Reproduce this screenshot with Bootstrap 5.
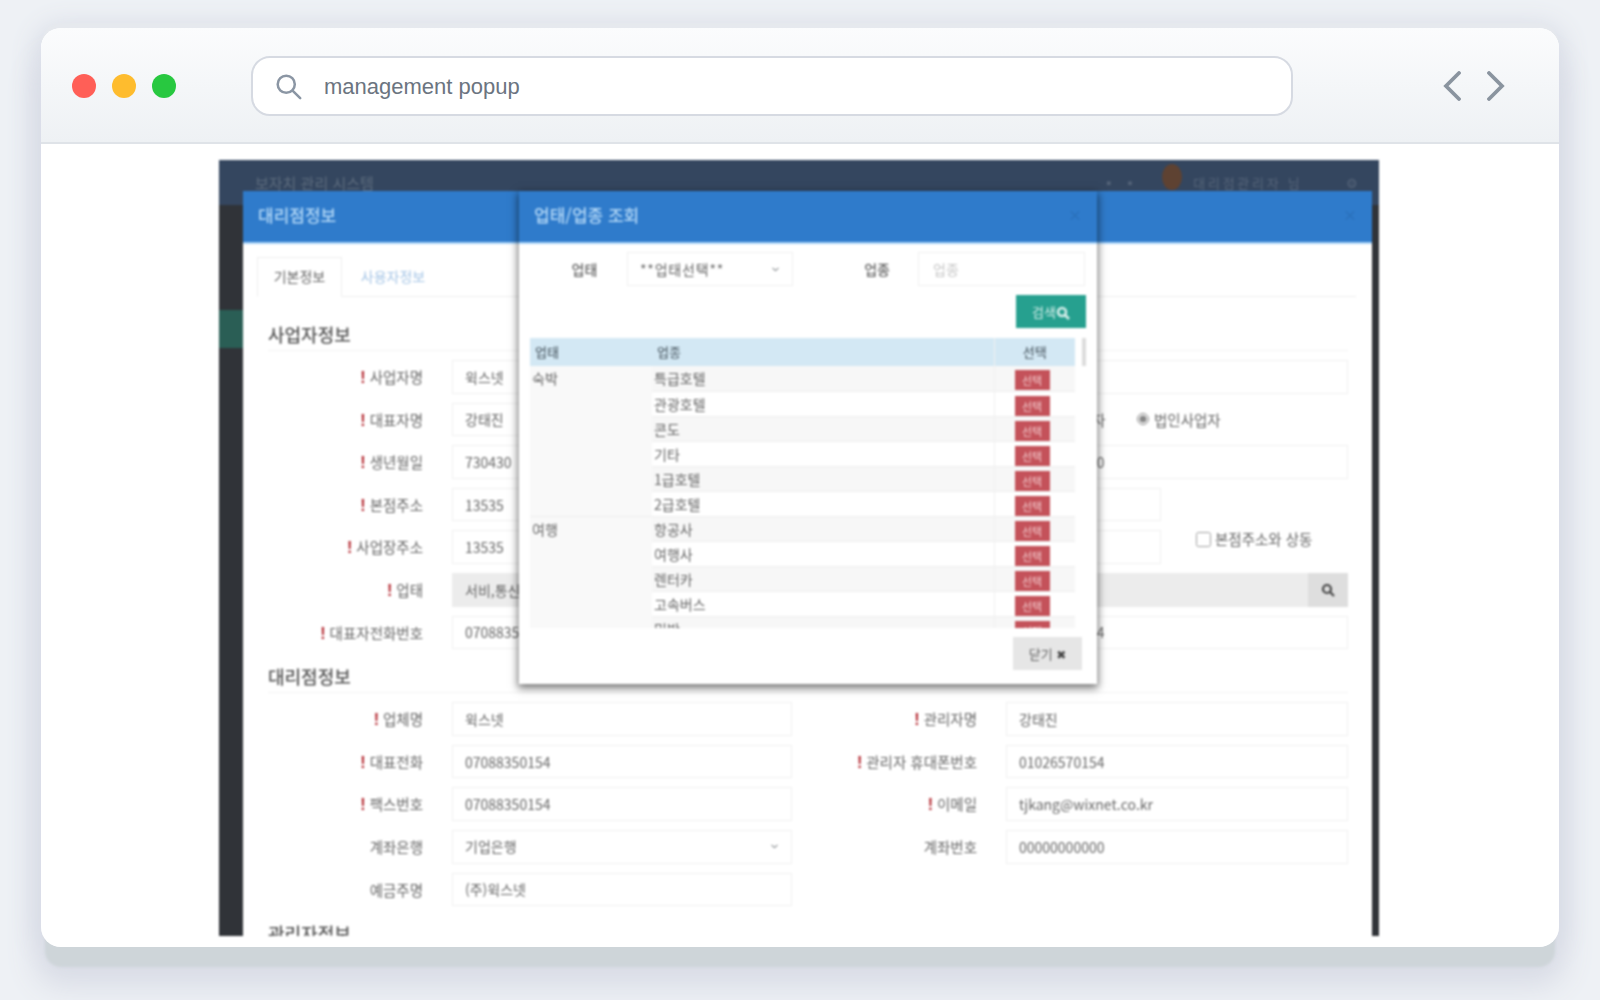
<!DOCTYPE html>
<html lang="ko">
<head>
<meta charset="utf-8">
<title>management popup</title>
<link rel="stylesheet" href="https://cdn.jsdelivr.net/npm/bootstrap@5.3.0/dist/css/bootstrap.min.css">
<style>
html,body{height:100%;}
body{background:#eef1f5;font-family:"Liberation Sans","Noto Sans CJK KR",sans-serif;overflow:hidden;padding:28px 41px 53px;}
.win{height:919px;background:#fff;border-radius:20px;overflow:hidden;}
.win-shadow{border-radius:20px;box-shadow:0 -6px 2px -1px #e6e9ee,0 24px 3px -4px #ced5d9,0 34px 30px 6px #d9dce6,0 2px 26px 6px #d8dce6;}
.chrome{height:116px;background:linear-gradient(#fbfcfd,#eef1f4);border-bottom:2px solid #dfe3e8;padding:2px 0 0 31px;}
.dots{gap:16px;width:179px;}
.dot{width:24px;height:24px;border-radius:50%;}
.urlbar{width:1042px;height:60px;border:2px solid #d6dae2;border-radius:19px;background:#fff;padding-left:22px;color:#6b7480;font-family:"Liberation Sans",sans-serif;font-size:22px;}
.urlbar svg{margin-right:22px;}
.navs{gap:26px;margin-left:150px;}
.view{padding:16px 0 0 178px;}
.shot{position:relative;width:1160px;height:776px;overflow:hidden;background:#303338;filter:blur(1px);font-size:14px;color:#666;font-family:"Noto Sans CJK KR","Liberation Sans",sans-serif;}
.topbar{height:45px;background:#34465f;padding:14px 18px 0 36px;color:#5d6c7e;font-size:15px;line-height:18px;}
.tb-r{font-size:13px;color:#56657a;letter-spacing:2.7px;}
.tb-dots{margin-right:23px;}
.avatar{width:20px;height:26px;border-radius:50%;background:#5e4232;margin:-10px 11px 0 0;}
.tb-gear{margin-left:44px;}
.greenbit{height:38px;width:24px;margin-top:105px;background:#2a5e55;}
.pop{position:absolute;top:31px;border:0;border-radius:0;background:#fff;}
.pop-a{left:24px;width:1129px;height:760px;}
.pop-b{left:300px;width:578px;height:493px;box-shadow:0 3px 8px 1px rgba(0,0,0,.55);}
.pop .modal-header{height:53px;background:#2f7bcb;border:0;border-bottom:2px solid #a8d2f7;border-radius:0;padding:0 15px 4px;color:#b3d8f7;}
.pop .modal-title{font-size:17px;font-weight:500;line-height:20px;}
.shut{color:#296db6;font-size:14px;}
.bd-a{padding:13px 16px 0 14px;}
.tabs{border-bottom:1px solid #eee;height:40px;}
.tabs .nav-link{height:40px;width:85px;padding:0;font-size:14px;line-height:36px;text-align:center;color:#a5c5e6;border:1px solid transparent;border-radius:0;}
.tabs .nav-item+.nav-item .nav-link{margin-left:1px;width:100px;}
.tabs .nav-link.active{color:#666;border-color:#eee #eee #fff;}
.sect{margin-left:11px;width:1080px;}
.sect-h{margin:0 0 9px;padding-bottom:6px;border-bottom:1px solid #f3f3f3;font-size:18px;font-weight:500;line-height:20px;color:#555;}
.sect-first{margin-top:27px;}
.sect-next{margin-top:17px;}
.fgrid{display:grid;grid-template-columns:184px 340px 214px 342px;row-gap:9px;grid-auto-rows:33.6px;}
.lbl{text-align:right;line-height:33px;font-size:14.5px;color:#666;margin:0;padding-right:29px;white-space:nowrap;}
.req{color:#b3262e;font-weight:700;font-size:16px;font-family:"Liberation Sans",sans-serif;margin-right:4px;}
.shot .form-control,.shot .form-select{height:33.6px;min-height:0;border:1px solid #f1f1f1;border-radius:0;padding:0 12px;font-size:14px;color:#666;line-height:31px;font-family:"Noto Sans CJK KR","Liberation Sans",sans-serif;box-shadow:none;}
.shot .form-select{background-size:9px 7px;background-position:right 12px center;}
.shot .form-control::placeholder{color:#c6c6c6;}
.shot .ro{background:#ececec;border-color:#ececec;}
.wide{grid-column:2 / -1;}
.addr{width:709px;flex:none;}
.srch-add{width:40px;flex:none;background:#dedede;}
.rad{gap:5px;font-size:14.5px;line-height:33px;}
.rad input{margin:0;width:12px;height:12px;accent-color:#888;}
.rad-l{margin-left:16px;width:115px;}
.chk{margin:0 0 16px 35px;gap:4px;font-size:14.5px;white-space:nowrap;}
.chk input{margin:0;width:15px;height:15px;opacity:.7;}
.bd-b{padding:8px 11px 13px;display:flex;flex-direction:column;}
.srow{height:34px;}
.srow .s-l{width:97px;padding-left:12px;text-align:center;font-size:14px;font-weight:500;line-height:34px;}
.shot .srow .form-select,.shot .srow .form-control{height:34px;}
.shot .srow .form-control{padding-left:14px;}
.shot .sel-u{width:166px;flex:none;letter-spacing:.8px;}
.srow .s-l2{width:125px;text-align:right;padding-right:28px;font-size:14px;font-weight:500;line-height:34px;}
.inp-u{width:167px;flex:none;}
.go-wrap{margin:9px 0 10px;}
.go{width:70px;height:33px;padding:0;border:0;border-radius:0;background:#26a08f;color:#d4ede9;font-size:13px;line-height:33px;}
.tbl-wrap{position:relative;height:290px;overflow:hidden;}
.table.tbl{width:545px;margin:0;table-layout:fixed;font-size:14px;color:#666;border-collapse:collapse;}
.table.tbl>:not(caption)>*>*{padding:1px 2px 0;border:0;height:25.1px;line-height:23px;vertical-align:top;background:transparent;box-shadow:none;color:#666;}
.table.tbl>thead>tr>th{padding:0 5px;background:#d3e8f4;height:28px;line-height:28px;font-size:13px;font-weight:500;color:#5c6b75;}
.table.tbl>tbody>tr>td{border-bottom:1px solid #eeeeee;}
.table.tbl>tbody>tr:nth-child(odd)>td.it{background:#f7f7f7;}
.table.tbl>tbody>tr>td.grp{background:#f9f9f9;}
.table.tbl>tbody>tr>td.ac,.table.tbl>thead>tr>th.ac{border-left:1px solid #f1f1f1;}
.table.tbl>tbody>tr>td.ac{padding:4px 0 0 20px;}
.pick{display:block;width:35px;height:20px;padding:0;border:0;border-radius:0;background:#c4525a;color:#f1c9cb;font-size:11px;line-height:20px;}
.sbar{position:absolute;left:552px;top:0;width:5px;height:28px;background:#dcdcdc;}
.bye{width:69px;height:33px;padding:0;margin:9px 4px 0 0;border:0;border-radius:0;background:#e6e6e6;color:#666;font-size:13px;line-height:33px;}
.sym{font-family:"DejaVu Sans",sans-serif;font-size:12px;color:#444;}
</style>
</head>
<body>
<div class="win-shadow">
<div class="win d-flex flex-column">
  <header class="chrome d-flex align-items-center flex-shrink-0">
    <div class="dots d-flex">
      <span class="dot" style="background:#ff5f57"></span>
      <span class="dot" style="background:#febc2e"></span>
      <span class="dot" style="background:#28c840"></span>
    </div>
    <div class="urlbar d-flex align-items-center">
      <svg width="27" height="27" viewBox="0 0 30 30" fill="none" stroke="#8b96a4" stroke-width="2.8" stroke-linecap="round"><circle cx="12.500" cy="12.500" r="9.500"/><path d="M19.500 19.500l8.500 8.500"/></svg>
      <span>management popup</span>
    </div>
    <div class="navs d-flex align-items-center">
      <svg width="18" height="30" viewBox="0 0 18 30" fill="none" stroke="#8a949f" stroke-width="3.800" stroke-linecap="round" stroke-linejoin="miter"><path d="M16 2L3 15 16 28"/></svg>
      <svg width="18" height="30" viewBox="0 0 18 30" fill="none" stroke="#8a949f" stroke-width="3.800" stroke-linecap="round" stroke-linejoin="miter"><path d="M2 2l13 13L2 28"/></svg>
    </div>
  </header>
  <main class="view flex-grow-1">
    <div class="shot">
      <div class="topbar d-flex justify-content-between">
        <span>보자치 관리 시스템</span>
        <span class="tb-r d-flex">
          <span class="tb-dots">▪ ▪</span><span class="avatar"></span><span>대리점관리자 님</span><span class="tb-gear">⚙</span>
        </span>
      </div>
      <div class="greenbit"></div>

      <section class="modal-content pop pop-a">
        <div class="modal-header d-flex justify-content-between">
          <h5 class="modal-title">대리점정보</h5><span class="shut">×</span>
        </div>
        <div class="bd-a">
          <ul class="nav nav-tabs tabs">
            <li class="nav-item"><a class="nav-link active" href="#">기본정보</a></li>
            <li class="nav-item"><a class="nav-link" href="#">사용자정보</a></li>
          </ul>
          <div class="sect">
            <h6 class="sect-h sect-first">사업자정보</h6>
            <div class="fgrid">
              <label class="lbl"><span class="req">!</span>사업자명</label><input class="form-control" value="윅스넷">
              <label class="lbl"><span class="req">!</span>사업자번호</label><input class="form-control" value="1148212345">
              <label class="lbl"><span class="req">!</span>대표자명</label><input class="form-control" value="강태진">
              <label class="lbl"><span class="req">!</span>사업자구분</label>
              <div class="d-flex align-items-center">
                <label class="rad rad-l d-flex align-items-center"><input type="radio" name="bz">개인사업자</label>
                <label class="rad d-flex align-items-center"><input type="radio" name="bz" checked>법인사업자</label>
              </div>
              <label class="lbl"><span class="req">!</span>생년월일</label><input class="form-control" value="730430">
              <label class="lbl"><span class="req">!</span>법인번호</label><input class="form-control" value="11011112340">
              <label class="lbl"><span class="req">!</span>본점주소</label>
              <div class="wide d-flex"><input class="form-control addr" value="13535"></div>
              <label class="lbl"><span class="req">!</span>사업장주소</label>
              <div class="wide d-flex align-items-center">
                <input class="form-control addr" value="13535">
                <label class="chk d-flex align-items-center"><input type="checkbox">본점주소와 상동</label>
              </div>
              <label class="lbl"><span class="req">!</span>업태</label>
              <div class="wide d-flex"><input class="form-control ro" value="서비,통신"><span class="srch-add d-flex align-items-center justify-content-center"><svg width="14" height="14" viewBox="0 0 14 14" fill="none" stroke="#444" stroke-width="2.200"><circle cx="6" cy="6" r="4"/><path d="M9 9l4 4"/></svg></span></div>
              <label class="lbl"><span class="req">!</span>대표자전화번호</label><input class="form-control" value="07088350154">
              <label class="lbl"><span class="req">!</span>대표자휴대폰</label><input class="form-control" value="07088350154">
            </div>
            <h6 class="sect-h sect-next">대리점정보</h6>
            <div class="fgrid">
              <label class="lbl"><span class="req">!</span>업체명</label><input class="form-control" value="윅스넷">
              <label class="lbl"><span class="req">!</span>관리자명</label><input class="form-control" value="강태진">
              <label class="lbl"><span class="req">!</span>대표전화</label><input class="form-control" value="07088350154">
              <label class="lbl"><span class="req">!</span>관리자 휴대폰번호</label><input class="form-control" value="01026570154">
              <label class="lbl"><span class="req">!</span>팩스번호</label><input class="form-control" value="07088350154">
              <label class="lbl"><span class="req">!</span>이메일</label><input class="form-control" value="tjkang@wixnet.co.kr">
              <label class="lbl">계좌은행</label><select class="form-select"><option>기업은행</option></select>
              <label class="lbl">계좌번호</label><input class="form-control" value="00000000000">
              <label class="lbl">예금주명</label><input class="form-control" value="(주)윅스넷">
            </div>
            <h6 class="sect-h sect-next">관리자정보</h6>
          </div>
        </div>
      </section>

      <section class="modal-content pop pop-b">
        <div class="modal-header d-flex justify-content-between">
          <h5 class="modal-title">업태/업종 조회</h5><span class="shut">×</span>
        </div>
        <div class="bd-b">
          <div class="srow d-flex">
            <span class="s-l">업태</span>
            <select class="form-select sel-u"><option>**업태선택**</option></select>
            <span class="s-l2">업종</span>
            <input class="form-control inp-u" placeholder="업종">
          </div>
          <div class="go-wrap d-flex justify-content-end">
            <button class="btn go" type="button">검색<svg width="14" height="14" viewBox="0 0 14 14" fill="none" stroke="#d4ede9" stroke-width="2.600"><circle cx="6" cy="6" r="4"/><path d="M9 9l4 4"/></svg></button>
          </div>
          <div class="tbl-wrap">
            <table class="table tbl">
              <colgroup><col style="width:122px"><col style="width:342px"><col style="width:81px"></colgroup>
              <thead><tr><th>업태</th><th>업종</th><th class="ac text-center">선택</th></tr></thead>
              <tbody>
                <tr><td class="grp" rowspan="6">숙박</td><td class="it">특급호텔</td><td class="it ac"><button class="btn pick" type="button">선택</button></td></tr>
                <tr><td class="it">관광호텔</td><td class="it ac"><button class="btn pick" type="button">선택</button></td></tr>
                <tr><td class="it">콘도</td><td class="it ac"><button class="btn pick" type="button">선택</button></td></tr>
                <tr><td class="it">기타</td><td class="it ac"><button class="btn pick" type="button">선택</button></td></tr>
                <tr><td class="it">1급호텔</td><td class="it ac"><button class="btn pick" type="button">선택</button></td></tr>
                <tr><td class="it">2급호텔</td><td class="it ac"><button class="btn pick" type="button">선택</button></td></tr>
                <tr><td class="grp" rowspan="5">여행</td><td class="it">항공사</td><td class="it ac"><button class="btn pick" type="button">선택</button></td></tr>
                <tr><td class="it">여행사</td><td class="it ac"><button class="btn pick" type="button">선택</button></td></tr>
                <tr><td class="it">렌터카</td><td class="it ac"><button class="btn pick" type="button">선택</button></td></tr>
                <tr><td class="it">고속버스</td><td class="it ac"><button class="btn pick" type="button">선택</button></td></tr>
                <tr><td class="it">민박</td><td class="it ac"><button class="btn pick" type="button">선택</button></td></tr>
              </tbody>
            </table>
            <span class="sbar"></span>
          </div>
          <div class="d-flex justify-content-end">
            <button class="btn bye" type="button">닫기 <span class="sym">✖</span></button>
          </div>
        </div>
      </section>
    </div>
  </main>
</div>
</div>
<script src="https://cdn.jsdelivr.net/npm/bootstrap@5.3.0/dist/js/bootstrap.bundle.min.js"></script>
</body>
</html>
